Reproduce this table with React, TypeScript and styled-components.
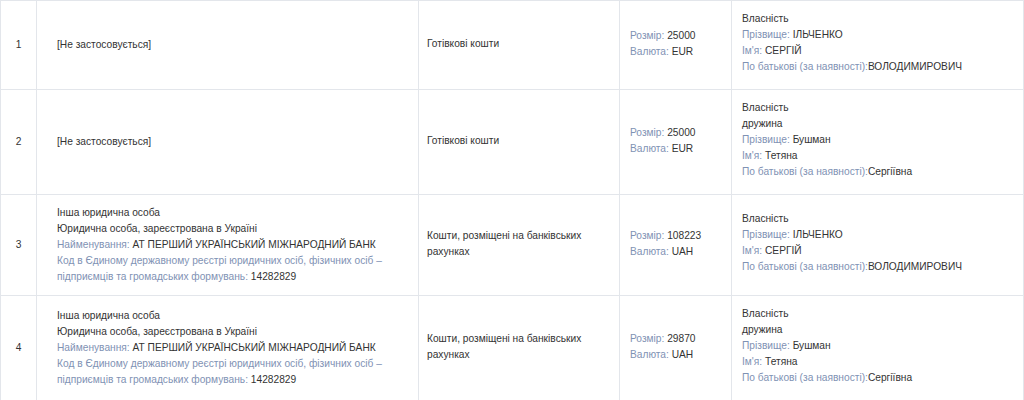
import React from "react";
import styled, { createGlobalStyle } from "styled-components";

const GlobalStyle = createGlobalStyle`
  body {
    margin: 0;
    background: #fff;
    font-family: "Liberation Sans", Arial, sans-serif;
    color: #333;
  }
`;

type Person = {
  relation?: string;
  last: string;
  first: string;
  middle: string;
};

type Owner =
  | { kind: "none" }
  | { kind: "company"; name: string; code: string };

type Row = {
  owner: Owner;
  asset: string;
  size: string;
  currency: string;
  person: Person;
};

const serhii: Person = { last: "ІЛЬЧЕНКО", first: "СЕРГІЙ", middle: "ВОЛОДИМИРОВИЧ" };
const tetiana: Person = { relation: "дружина", last: "Бушман", first: "Тетяна", middle: "Сергіївна" };
const bank: Owner = {
  kind: "company",
  name: "АТ ПЕРШИЙ УКРАЇНСЬКИЙ МІЖНАРОДНИЙ БАНК",
  code: "14282829",
};

const rows: Row[] = [
  { owner: { kind: "none" }, asset: "Готівкові кошти", size: "25000", currency: "EUR", person: serhii },
  { owner: { kind: "none" }, asset: "Готівкові кошти", size: "25000", currency: "EUR", person: tetiana },
  { owner: bank, asset: "Кошти, розміщені на банківських рахунках", size: "108223", currency: "UAH", person: serhii },
  { owner: bank, asset: "Кошти, розміщені на банківських рахунках", size: "29870", currency: "UAH", person: tetiana },
];

function App() {
  return (
    <>
      <GlobalStyle />
      <Table>
        <colgroup>
          <col style={{ width: 36 }} />
          <col style={{ width: 382 }} />
          <col style={{ width: 201 }} />
          <col style={{ width: 112 }} />
          <col />
        </colgroup>
        <tbody>
          {rows.map((r, i) => (
            <tr key={i}>
              <NumCell>{i + 1}</NumCell>
              <OwnerCell>
                {r.owner.kind === "none" ? (
                  <Line>[Не застосовується]</Line>
                ) : (
                  <>
                    <Line>Інша юридична особа</Line>
                    <Line>Юридична особа, зареєстрована в Україні</Line>
                    <Line>
                      <Label>Найменування:</Label> {r.owner.name}
                    </Line>
                    <Line>
                      <Label>
                        Код в Єдиному державному реєстрі юридичних осіб, фізичних осіб –
                        підприємців та громадських формувань:
                      </Label>{" "}
                      {r.owner.code}
                    </Line>
                  </>
                )}
              </OwnerCell>
              <Cell>
                <Line>{r.asset}</Line>
              </Cell>
              <SumCell>
                <Line>
                  <Label>Розмір:</Label> {r.size}
                </Line>
                <Line>
                  <Label>Валюта:</Label> {r.currency}
                </Line>
              </SumCell>
              <PersonCell>
                <Line>Власність</Line>
                {r.person.relation && <Line>{r.person.relation}</Line>}
                <Line>
                  <Label>Прізвище:</Label> {r.person.last}
                </Line>
                <Line>
                  <Label>Ім'я:</Label> {r.person.first}
                </Line>
                <Line>
                  <Label>По батькові (за наявності):</Label>
                  {r.person.middle}
                </Line>
              </PersonCell>
            </tr>
          ))}
        </tbody>
      </Table>
    </>
  );
}

const Table = styled.table`
  width: 1024px;
  table-layout: fixed;
  border-collapse: collapse;
  font-size: 10.2px;
  line-height: 16px;
`;

const Cell = styled.td`
  border: 1px solid #e3e6eb;
  padding: 10px 8px 13px;
  vertical-align: middle;
  color: #333;
`;

const NumCell = styled(Cell)`
  text-align: center;
  padding: 10px 4px;
`;

const OwnerCell = styled(Cell)`
  padding: 10px 20px;
`;

const SumCell = styled(Cell)`
  padding-left: 10px;
`;

const PersonCell = styled(Cell)`
  padding: 10px 10px 14px;
`;

const Line = styled.div``;

const Label = styled.span`
  color: #7f92b4;
`;

export default App;
